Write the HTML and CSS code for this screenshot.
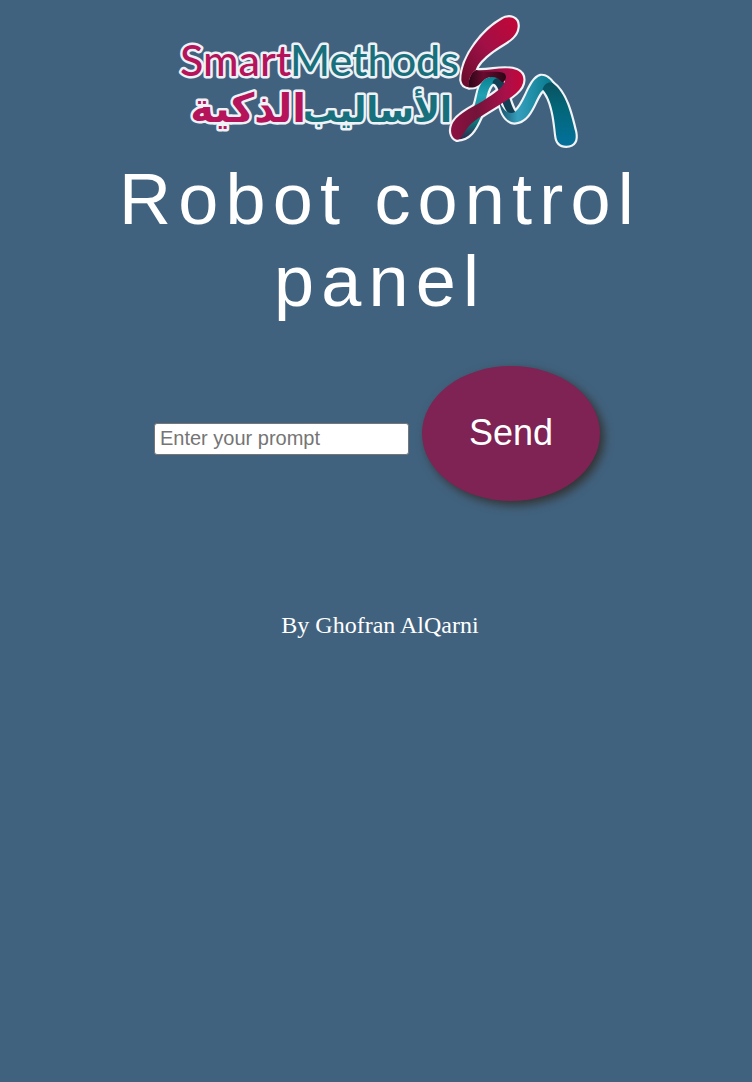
FILE: index.html
```html
<!DOCTYPE html>
<html lang="en">
<head>
<meta charset="utf-8">
<meta name="viewport" content="width=device-width, initial-scale=1">
<title>Robot control panel</title>
<link rel="stylesheet" href="styles.css">
</head>
<body class="page">
<header class="header">
  <svg class="logo" viewBox="0 0 400 138" role="img" aria-label="SmartMethods">
    <defs>
      <linearGradient id="red-top" x1="0" y1="1" x2="1" y2="0"><stop offset="0" stop-color="#650c2b"/><stop offset=".5" stop-color="#a01046"/><stop offset="1" stop-color="#c40638"/></linearGradient>
      <linearGradient id="red-low" x1="0" y1="0" x2="1" y2="0"><stop offset="0" stop-color="#8d1140"/><stop offset=".35" stop-color="#74133a"/><stop offset=".75" stop-color="#a8104a"/><stop offset="1" stop-color="#c50639"/></linearGradient>
      <linearGradient id="fold" x1="0" y1="0" x2="1" y2="0"><stop offset="0" stop-color="#2a0716"/><stop offset=".4" stop-color="#6a0b30"/><stop offset="1" stop-color="#2a0716"/></linearGradient>
      <linearGradient id="teal-leg" x1="0" y1="1" x2="0" y2="0"><stop offset="0" stop-color="#34244a"/><stop offset=".3" stop-color="#087d80"/><stop offset=".7" stop-color="#23a0b4"/><stop offset="1" stop-color="#078391"/></linearGradient>
      <linearGradient id="teal-mid" x1="0" y1="0" x2="1" y2="0"><stop offset="0" stop-color="#164c66"/><stop offset=".35" stop-color="#369fbd"/><stop offset="1" stop-color="#04788a"/></linearGradient>
      <linearGradient id="teal-end" x1="0" y1="0" x2="0" y2="1"><stop offset="0" stop-color="#09515f"/><stop offset=".4" stop-color="#036678"/><stop offset="1" stop-color="#04719c"/></linearGradient>
      <g id="ribbon">
        <path fill="url(#teal-leg)" d="M52 404C88 404 105 376 122 338C137 305 137 262 153 242C160 233 174 233 184 242L190 226C174 212 145 211 131 226C108 249 114 292 96 318C82 340 54 360 52 404Z"/>
        <path fill="#123f53" d="M158 235C182 239 181 298 205 324L230 326C211 307 207 261 190 229C180 214 158 220 158 235Z"/>
        <path fill="url(#teal-mid)" d="M176 280C184 310 204 333 225 321C258 296 267 223 302 213C318 211 332 225 340 237L311 254C286 268 278 351 224 353C192 350 181 315 176 280Z"/>
        <path fill="url(#teal-end)" d="M308 253C313 238 324 230 338 234C378 262 394 330 406 381C411 407 404 422 379 423C360 423 351 412 349 393C344 344 337 283 308 253Z"/>
        <path fill="url(#red-low)" d="M107 195C151 199 190 181 230 195C258 207 257 240 229 264C192 297 128 325 92 358C73 377 66 402 51 405C32 398 28 374 40 352C60 320 105 306 145 277C174 258 199 240 195 218C190 203 150 213 107 203Z"/>
        <path fill="url(#fold)" d="M85 247C85 222 93 200 109 195C130 207 172 194 193 205C203 214 197 229 187 233C170 210 143 213 129 228C114 246 103 249 85 247Z"/>
        <path fill="url(#red-top)" d="M185 44C208 29 236 38 233 66C229 105 185 115 153 142C132 158 114 175 107 195C91 207 84 226 88 247C74 246 66 238 64 225C65 150 136 71 185 44Z"/>
      </g>
    </defs>
    <g class="logo-text">
      <text class="latin smart" x="0" y="64">Smart</text>
      <text class="latin methods" x="110" y="64">Methods</text>
      <text class="arabic methods" x="272" y="110" direction="rtl">الأساليب</text>
      <text class="arabic arabic-wide smart" x="126" y="110" direction="rtl">الذكية</text>
    </g>
    <g transform="translate(260 -7) scale(.333)">
      <use class="ribbon-edge" href="#ribbon"/>
      <use href="#ribbon"/>
    </g>
  </svg>
  <h1 class="title">Robot control panel</h1>
</header>
<main>
  <form class="prompt-form">
    <input class="prompt" type="text" placeholder="Enter your prompt" aria-label="Enter your prompt">
    <button class="send" type="button">Send</button>
  </form>
</main>
<footer class="footer">By Ghofran AlQarni</footer>
</body>
</html>
```
FILE: styles.css
```css
.page {
  margin: 0;
  padding: 12px 8px 12px 16px;
  background: #41627e;
  color: #fff;
  font-family: "Liberation Serif", "Times New Roman", serif;
  text-align: center;
}
.logo {
  display: block;
  width: 100%;
  max-width: 400px;
  margin: 0 auto;
  overflow: visible;
}
.logo-text {
  stroke: #eef2f6;
  stroke-width: 5px;
  stroke-linejoin: round;
  paint-order: stroke;
}
.latin {
  font: 500 43px Lato, sans-serif;
}
.arabic {
  font: bold 35px "DejaVu Sans", sans-serif;
}
.arabic-wide {
  font-size: 40px;
}
.smart {
  fill: #b5145b;
}
.methods {
  fill: #17707c;
}
.ribbon-edge {
  stroke: #f1f3f6;
  stroke-width: 13px;
  stroke-linejoin: round;
}
.title {
  max-width: 600px;
  margin: 8px auto 0;
  font: 72px/82px "Liberation Sans", Arial, sans-serif;
  letter-spacing: 0.1em;
}
.prompt-form {
  display: flex;
  justify-content: center;
  align-items: baseline;
  gap: 13px;
  margin: 44px 6px 0 0;
}
.prompt {
  box-sizing: border-box;
  width: 255px;
  height: 32px;
  min-width: 0;
  padding: 0 5px;
  border: 1px solid #767676;
  border-radius: 3px;
  background: #fff;
  font: 20px "Liberation Sans", Arial, sans-serif;
}
.prompt::placeholder {
  color: #757575;
}
.send {
  padding: 46px 47px 48px;
  border: 0;
  border-radius: 50%;
  background: #7e2353;
  color: #fff;
  box-shadow: 4px 4px 10px #333;
  font: 36px/41px "Liberation Sans", Arial, sans-serif;
}
.footer {
  margin-top: 110px;
  font-size: 24px;
  line-height: 28px;
}
```
